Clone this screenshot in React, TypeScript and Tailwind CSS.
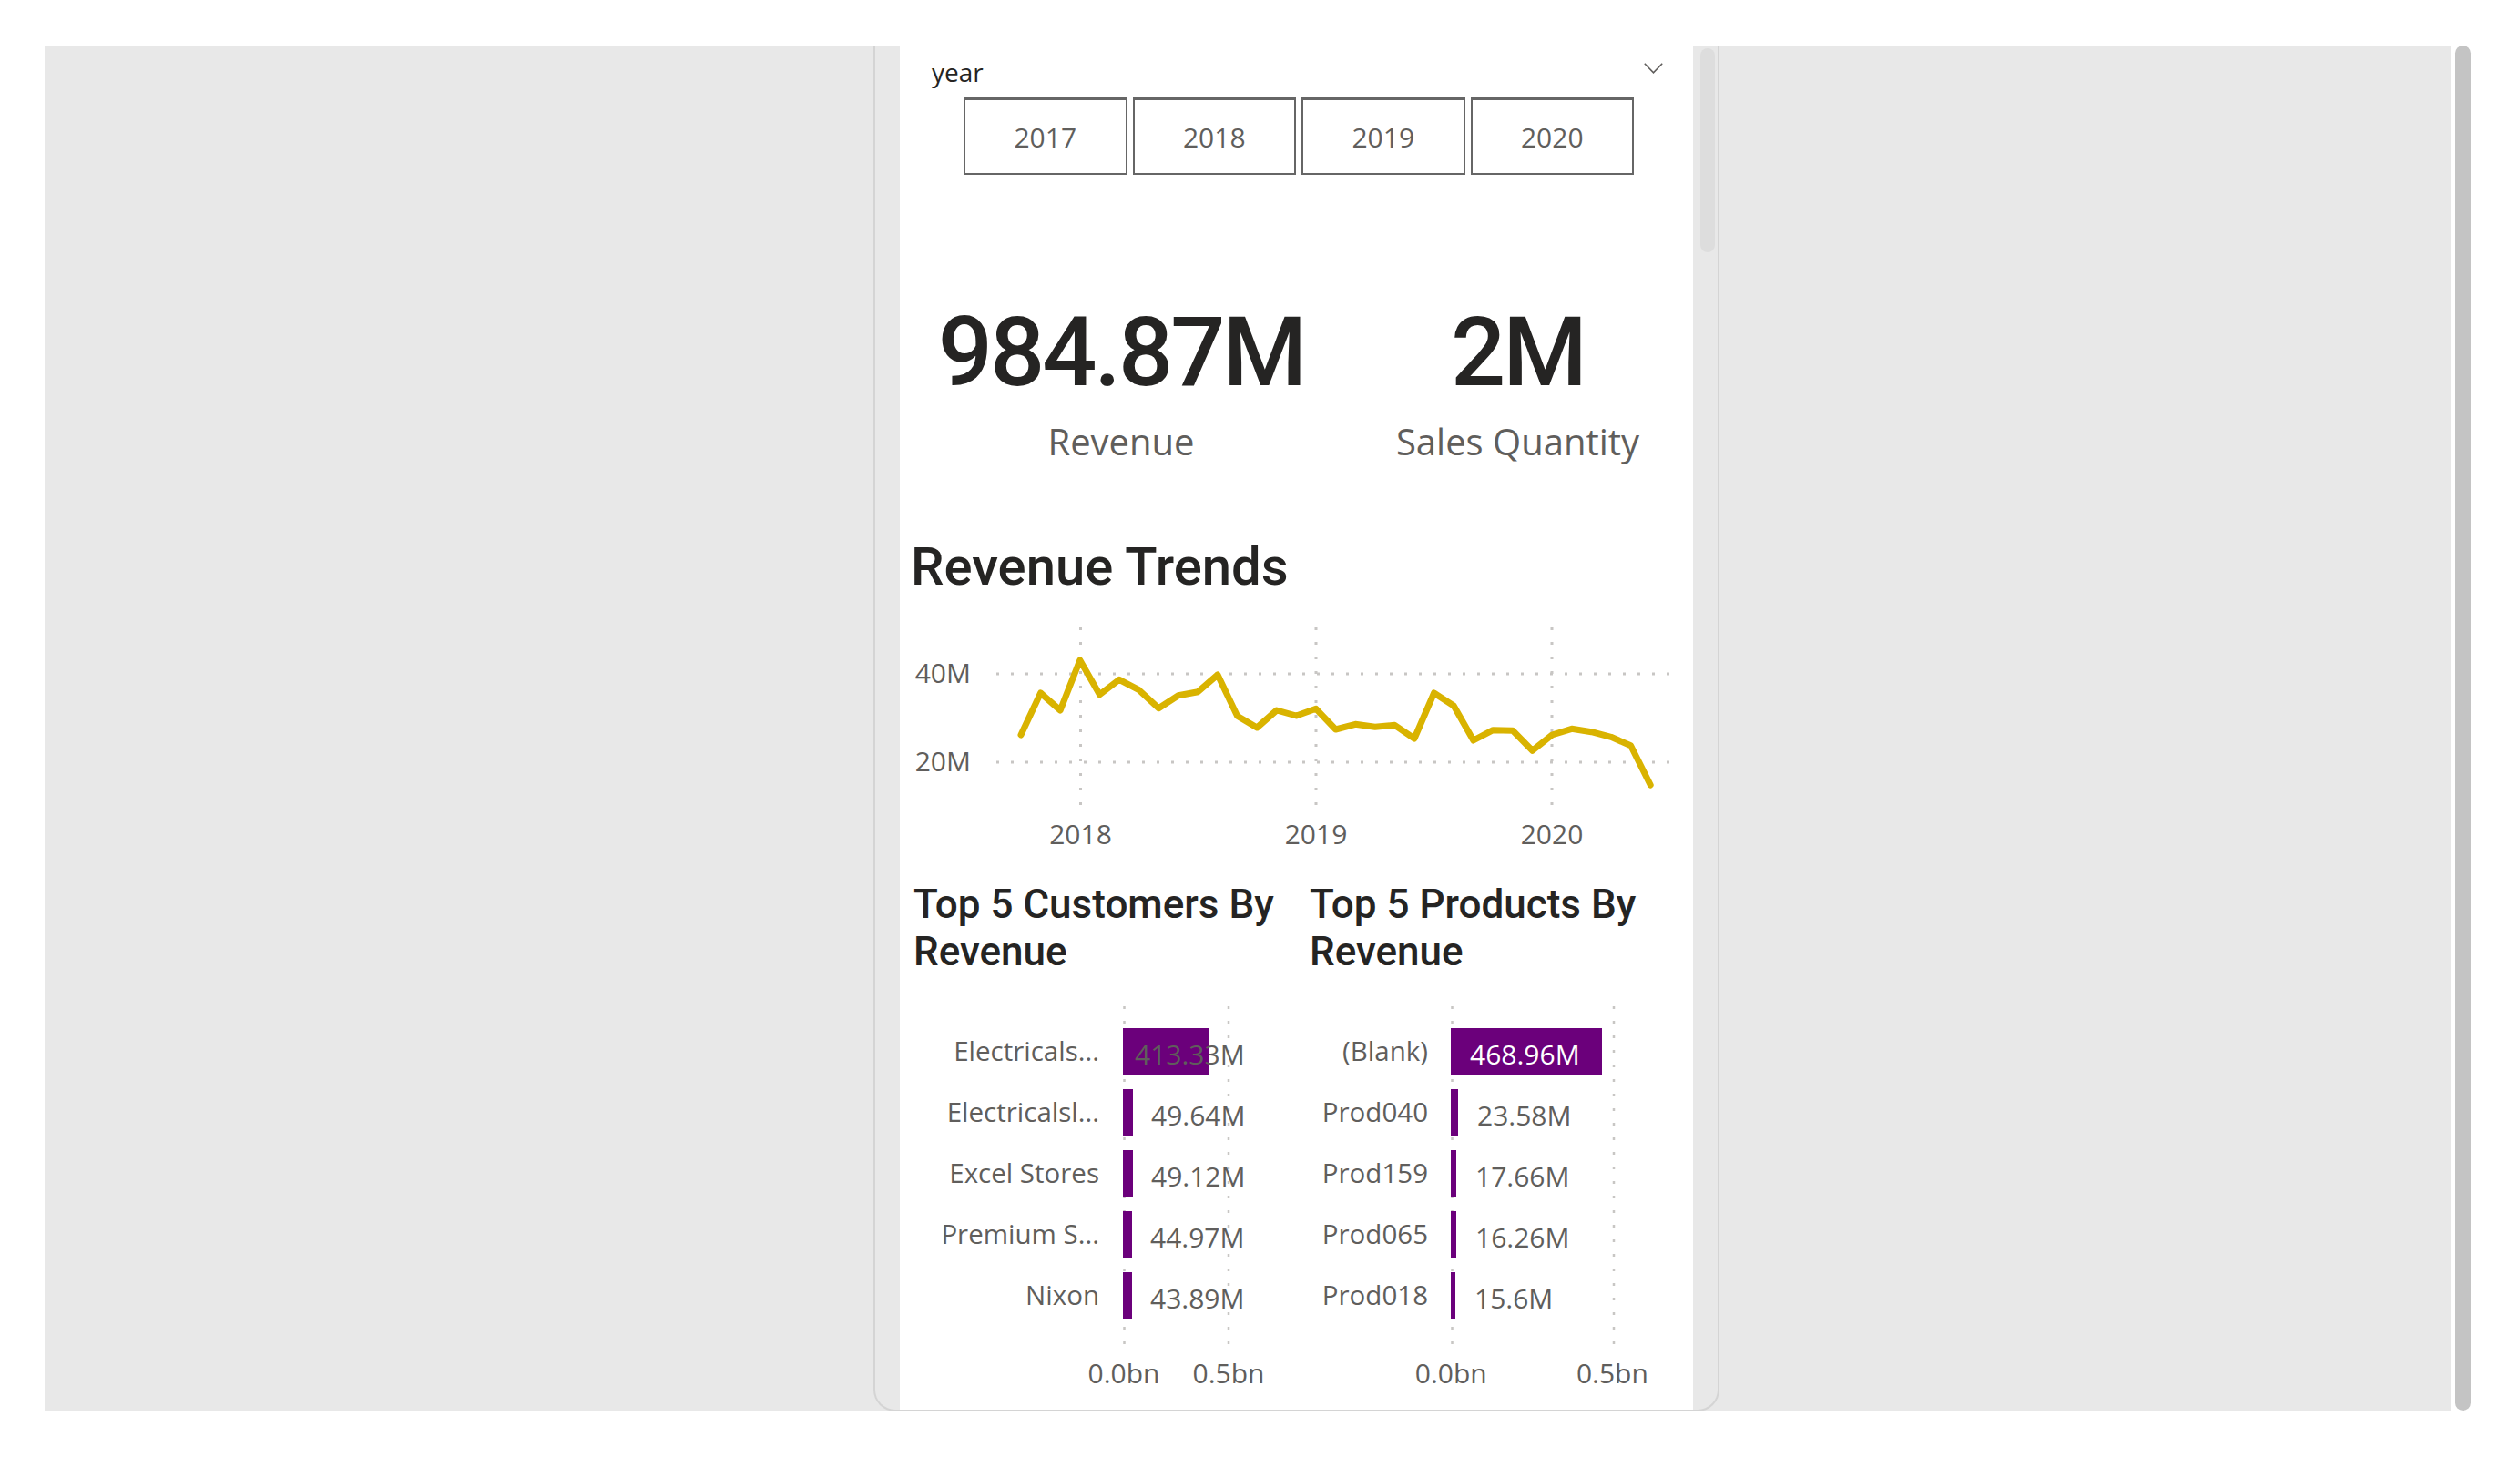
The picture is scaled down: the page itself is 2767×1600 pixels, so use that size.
import React from "react";

type BarRow = { label: string; value: string; width: number; inside?: boolean };

type BarChartProps = {
  title: string[];
  rows: BarRow[];
  labelWidth: number;
  gap: number;
  scale: number;
  titlePad: number;
  valueOffset: number;
  insideOffset: number;
  insideColor: string;
};

const revenue = [
  806, 760, 779, 724, 761.7, 745.3, 756.7, 776.7, 762.7, 758.7, 740, 785.3, 798, 779, 785, 777.3, 800,
  794.3, 797.3, 795.3, 810, 760, 774, 812, 800.7, 801.3, 823.3, 806, 799.3, 802.7, 808.3, 817.7, 861,
];

const customers: BarRow[] = [
  { label: "Electricals...", value: "413.33M", width: 95, inside: true },
  { label: "Electricalsl...", value: "49.64M", width: 11 },
  { label: "Excel Stores", value: "49.12M", width: 11 },
  { label: "Premium S...", value: "44.97M", width: 10 },
  { label: "Nixon", value: "43.89M", width: 10 },
];

const products: BarRow[] = [
  { label: "(Blank)", value: "468.96M", width: 166, inside: true },
  { label: "Prod040", value: "23.58M", width: 8 },
  { label: "Prod159", value: "17.66M", width: 6 },
  { label: "Prod065", value: "16.26M", width: 6 },
  { label: "Prod018", value: "15.6M", width: 5 },
];

const years = ["2017", "2018", "2019", "2020"];

const BarChart: React.FC<BarChartProps> = ({ title, rows, labelWidth, gap, scale, titlePad, valueOffset, insideOffset, insideColor }) => {
  return (
    <div className="flex flex-col">
      <div className="font-['Roboto',sans-serif] text-[44px] leading-[52px] font-medium text-[#252423]" style={{ paddingLeft: titlePad }}>
        {title.map((t) => (
          <div key={t}>{t}</div>
        ))}
      </div>
      <div className="mt-[34px] flex">
        <div className="flex flex-col pt-[16px] pb-[23px]" style={{ width: labelWidth, marginRight: gap }}>
          {rows.map((r) => (
            <div key={r.label} className="flex h-[67px] items-center justify-end text-[29.5px] text-[#605e5c] whitespace-nowrap">
              {r.label}
            </div>
          ))}
        </div>
        <div className="relative flex-1 pt-[16px] pb-[23px]">
          <svg className="pointer-events-none absolute left-0 top-0 h-full w-full" preserveAspectRatio="none">
            <line x1="1.5" y1="0" x2="1.5" y2="374" stroke="#c8c6c4" strokeWidth="2.5" strokeDasharray="3 13" />
            <line x1={scale + 1} y1="0" x2={scale + 1} y2="374" stroke="#c8c6c4" strokeWidth="2.5" strokeDasharray="3 13" />
          </svg>
          {rows.map((r) => (
            <div key={r.label} className="relative flex h-[67px] items-center">
              <div className="h-[52px] bg-[#6b007b]" style={{ width: r.width }} />
              <span
                className="absolute top-[17px] whitespace-nowrap text-[30px] leading-[40px]"
                style={{
                  left: r.inside ? insideOffset : r.width + valueOffset,
                  color: r.inside ? insideColor : "#605e5c",
                }}
              >
                {r.value}
              </span>
            </div>
          ))}
        </div>
      </div>
      <div className="mt-[9px] flex text-[30px] leading-[40px] text-[#605e5c]">
        <div style={{ width: labelWidth + gap - scale / 2 + 1 }} />
        <div className="text-center" style={{ width: scale }}>0.0bn</div>
        <div className="text-center" style={{ width: scale }}>0.5bn</div>
      </div>
    </div>
  );
};

const TrendChart = () => {
  const pts = revenue.map((y, i) => `${1121 + i * 21.6},${y}`).join(" ");
  const grid = { stroke: "#c8c6c4", strokeWidth: 3, strokeDasharray: "3 13" };
  return (
    <svg width="871" height="290" viewBox="988 650 871 290" className="block">
      <line x1="1094" y1="739" x2="1842" y2="739" {...grid} />
      <line x1="1094" y1="836" x2="1842" y2="836" {...grid} />
      {[1186.5, 1445, 1704].map((x) => (
        <line key={x} x1={x} y1="688" x2={x} y2="884" {...grid} />
      ))}
      <g fontFamily="'Open Sans', sans-serif" fontSize="30" fill="#605e5c">
        <text x="1066" y="741" textAnchor="end" dominantBaseline="middle">40M</text>
        <text x="1066" y="838" textAnchor="end" dominantBaseline="middle">20M</text>
        <text x="1186.5" y="918" textAnchor="middle" dominantBaseline="middle">2018</text>
        <text x="1445" y="918" textAnchor="middle" dominantBaseline="middle">2019</text>
        <text x="1704" y="918" textAnchor="middle" dominantBaseline="middle">2020</text>
      </g>
      <polyline points={pts} fill="none" stroke="#d9b300" strokeWidth="7" strokeLinejoin="round" strokeLinecap="round" />
    </svg>
  );
};

export default function App() {
  return (
    <div className="flex h-[1600px] w-[2767px] bg-white pt-[50px] pl-[49px] font-['Open_Sans',sans-serif]">
      <div className="flex h-[1500px] w-[2642px] overflow-hidden bg-[#e8e8e8] pl-[910px]">
        <div className="flex h-[1500px] w-[929px] rounded-b-[24px] border-x-2 border-b-2 border-[#d4d4d4] pl-[27px]">
          <div className="flex h-full w-[871px] flex-col bg-white">
            {/* year slicer */}
            <div className="mt-[10px] flex h-[38px] justify-between pl-[35px] pr-[33px]">
              <span className="text-[28px] leading-[38px] text-[#252423]">year</span>
              <svg width="21" height="12" viewBox="0 0 21 12" className="mt-[9px]">
                <path d="M0.8 0.8 L10.5 10.8 L20.2 0.8" fill="none" stroke="#605e5c" strokeWidth="1.6" />
              </svg>
            </div>
            <div className="mt-[9px] ml-[70px] flex h-[85px] w-[736px] gap-[6px]">
              {years.map((y) => (
                <div key={y} className="flex flex-1 items-center justify-center border-2 border-t-[3px] border-[#666666] text-[30px] text-[#605e5c]">
                  {y}
                </div>
              ))}
            </div>

            {/* cards */}
            <div className="mt-[142px] flex">
              <div className="flex w-[486px] flex-col items-center">
                <div className="font-['Roboto',sans-serif] text-[106px] leading-[106px] font-medium tracking-[-3px] text-[#252423]">984.87M</div>
                <div className="mt-[21px] text-[40px] leading-[48px] text-[#605e5c]">Revenue</div>
              </div>
              <div className="flex w-[385px] flex-col items-center">
                <div className="font-['Roboto',sans-serif] text-[106px] leading-[106px] font-medium tracking-[-3px] text-[#252423]">2M</div>
                <div className="mt-[21px] text-[40px] leading-[48px] text-[#605e5c]">Sales Quantity</div>
              </div>
            </div>

            {/* trend */}
            <div className="mt-[84px] pl-[12px] font-['Roboto',sans-serif] text-[58px] leading-[58px] font-medium text-[#252423]">Revenue Trends</div>
            <TrendChart />

            {/* top 5 */}
            <div className="mt-[26px] flex">
              <div className="w-[436px]">
                <BarChart
                  title={["Top 5 Customers By", "Revenue"]}
                  rows={customers}
                  labelWidth={219}
                  gap={26}
                  scale={115}
                  titlePad={15}
                  valueOffset={20}
                  insideOffset={13}
                  insideColor="#605e5c"
                />
              </div>
              <div className="w-[435px]">
                <BarChart
                  title={["Top 5 Products By", "Revenue"]}
                  rows={products}
                  labelWidth={144}
                  gap={25}
                  scale={178}
                  titlePad={14}
                  valueOffset={21}
                  insideOffset={21}
                  insideColor="#ffffff"
                />
              </div>
            </div>
          </div>
          <div className="w-[27px] pt-[3px] pl-[8px]">
            <div className="h-[224px] w-[16px] rounded-full bg-[#dddddd]" />
          </div>
        </div>
      </div>
      <div className="ml-[5px] h-[1499px] w-[17px] rounded-full bg-[#c4c4c4]" />
    </div>
  );
}
